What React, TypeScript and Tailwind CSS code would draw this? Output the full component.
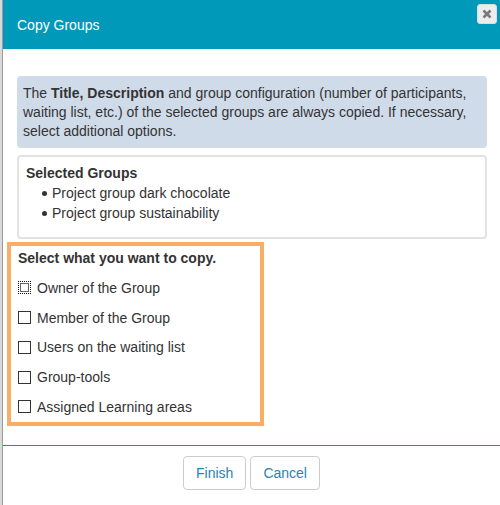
import { useState } from "react";

const options = [
  "Owner of the Group",
  "Member of the Group",
  "Users on the waiting list",
  "Group-tools",
  "Assigned Learning areas",
];

const groups = ["Project group dark chocolate", "Project group sustainability"];

export default function App() {
  const [checked, setChecked] = useState<boolean[]>(options.map(() => false));

  const toggle = (i: number) => {
    setChecked((prev) => prev.map((v, idx) => (idx === i ? !v : v)));
  };

  return (
    <div
      className="flex h-[505px] w-[500px] overflow-hidden bg-[#d6d6d6] text-[14px] text-[#333]"
      style={{ fontFamily: '"Liberation Sans", Arial, sans-serif' }}
    >
      {/* Seitenrand vom Hintergrund */}
      <div className="w-[2px] shrink-0 bg-[#d9d9d9]" />
      <div className="flex flex-1 flex-col border-l border-[#9a9a9a] bg-white">
        <header className="flex h-[49px] shrink-0 justify-between bg-[#0099ba] pl-[14px] pr-[3px]">
          <h4 className="self-center text-[14px] leading-[20px] text-white">Copy Groups</h4>
          <button
            type="button"
            className="mt-[4px] flex h-[20px] w-[20px] items-center justify-center rounded-[3px] border border-[#dcdcdc] bg-[#ededed] text-[#7a7a7a]"
            aria-label="close"
          >
            <svg width="10" height="10" viewBox="0 0 10 10">
              <path d="M1.5 1.5 L8.5 8.5 M8.5 1.5 L1.5 8.5" stroke="currentColor" strokeWidth="2.6" />
            </svg>
          </button>
        </header>

        <div className="flex flex-col pl-[14px] pr-[13px] pt-[27px]">
          <div className="h-[72px] rounded-[4px] bg-[#d0dbea] px-[6px] pt-[8px] leading-[19px]">
            The <b>Title, Description</b> and group configuration (number of participants,
            <br />
            waiting list, etc.) of the selected groups are always copied. If necessary,
            <br />
            select additional options.
          </div>

          <div className="mt-[7px] h-[84px] rounded-[4px] border-2 border-[#e2e2e2] pl-[7px] pt-[6px] leading-[20px]">
            <div className="font-bold">Selected Groups</div>
            <ul className="pl-[16px]">
              {groups.map((g) => (
                <li key={g} className="flex items-center">
                  <span className="mr-[5px] inline-block h-[5px] w-[5px] rounded-full bg-[#333]" />
                  {g}
                </li>
              ))}
            </ul>
          </div>

          <div className="ml-[-10px] mt-[3px] h-[184px] w-[257px] border-4 border-[#fbae62] pl-[7px] pt-[2px]">
            <div className="font-bold leading-[20px]">Select what you want to copy.</div>
            <div className="mt-[5px] flex flex-col">
              {options.map((o, i) => (
                <label key={o} className="flex h-[29.75px] items-center">
                  <input
                    type="checkbox"
                    checked={checked[i]}
                    onChange={() => toggle(i)}
                    className={
                      i === 0
                        ? "m-0 h-[13px] w-[13px] appearance-none border border-dotted border-[#111] bg-white outline outline-1 outline-[#666] -outline-offset-[3px]"
                        : "m-0 h-[13px] w-[13px] appearance-none border border-[#333] bg-white"
                    }
                  />
                  <span className="ml-[6px] leading-[20px]">{o}</span>
                </label>
              ))}
            </div>
          </div>
        </div>

        <div className="mt-[19px] h-px shrink-0 bg-[#0099ba]" />
        <div className="flex justify-center gap-[4px] pt-[10px]">
          <button
            type="button"
            className="h-[34px] rounded-[4px] border border-[#cccccc] bg-white px-[12px] text-[14px] text-[#2b82b4]"
          >
            Finish
          </button>
          <button
            type="button"
            className="h-[34px] rounded-[4px] border border-[#cccccc] bg-white px-[12px] text-[14px] text-[#2b82b4]"
          >
            Cancel
          </button>
        </div>
      </div>
    </div>
  );
}
